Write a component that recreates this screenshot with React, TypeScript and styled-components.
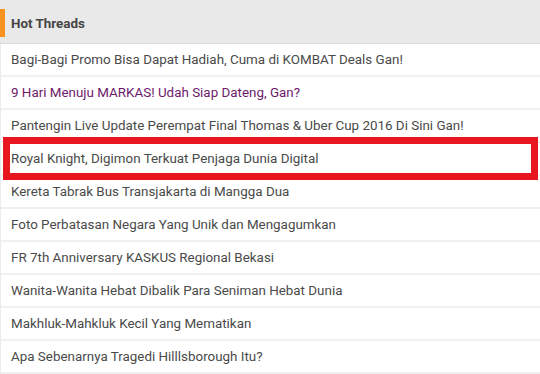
import React from "react";
import styled, { createGlobalStyle } from "styled-components";

const GlobalStyle = createGlobalStyle`
  html, body {
    margin: 0;
    padding: 0;
    background: #ffffff;
  }
  body {
    font-family: Roboto, "Liberation Sans", sans-serif;
  }
`;

interface Thread {
  title: string;
  visited?: boolean;
  highlighted?: boolean;
}

const threads: Thread[] = [
  { title: "Bagi-Bagi Promo Bisa Dapat Hadiah, Cuma di KOMBAT Deals Gan!" },
  { title: "9 Hari Menuju MARKAS! Udah Siap Dateng, Gan?", visited: true },
  { title: "Pantengin Live Update Perempat Final Thomas & Uber Cup 2016 Di Sini Gan!" },
  { title: "Royal Knight, Digimon Terkuat Penjaga Dunia Digital", highlighted: true },
  { title: "Kereta Tabrak Bus Transjakarta di Mangga Dua" },
  { title: "Foto Perbatasan Negara Yang Unik dan Mengagumkan" },
  { title: "FR 7th Anniversary KASKUS Regional Bekasi" },
  { title: "Wanita-Wanita Hebat Dibalik Para Seniman Hebat Dunia" },
  { title: "Makhluk-Mahkluk Kecil Yang Mematikan" },
  { title: "Apa Sebenarnya Tragedi Hilllsborough Itu?" },
];

const Panel = styled.section`
  width: 540px;
  height: 374px;
  overflow: hidden;
`;

const Header = styled.header`
  position: relative;
  box-sizing: border-box;
  height: 44px;
  display: flex;
  align-items: center;
  padding: 4px 0 0 11px;
  background: #e9e9e9;
  border-bottom: 1px solid #dcdcdc;
`;

const Accent = styled.span`
  position: absolute;
  left: 0;
  top: 9px;
  width: 5px;
  height: 28px;
  background: #f7931e;
`;

const Title = styled.h2`
  margin: 0;
  font-size: 13.4px;
  font-weight: 700;
  color: #454545;
`;

const List = styled.ul`
  list-style: none;
  margin: 0;
  padding: 0;
  border-left: 1px solid #ececec;
`;

const Row = styled.li`
  position: relative;
  height: 31px;
  display: flex;
  align-items: center;
  padding-left: 10px;
  border-bottom: 2px solid #f0f0f0;
`;

const Link = styled.a<{ $visited?: boolean }>`
  font-size: 13.4px;
  color: ${(p) => (p.$visited ? "#6e1a6c" : "#4a4a4a")};
  text-decoration: none;
  white-space: nowrap;
`;

const Marker = styled.span`
  position: absolute;
  left: 2px;
  right: 2px;
  top: -6px;
  bottom: -6px;
  border: 7px solid #e8161e;
  pointer-events: none;
`;

export default function App() {
  return (
    <>
      <GlobalStyle />
      <Panel>
        <Header>
          <Accent />
          <Title>Hot Threads</Title>
        </Header>
        <List>
          {threads.map((t) => (
            <Row key={t.title}>
              <Link href="#" $visited={t.visited}>
                {t.title}
              </Link>
              {t.highlighted && <Marker />}
            </Row>
          ))}
        </List>
      </Panel>
    </>
  );
}
